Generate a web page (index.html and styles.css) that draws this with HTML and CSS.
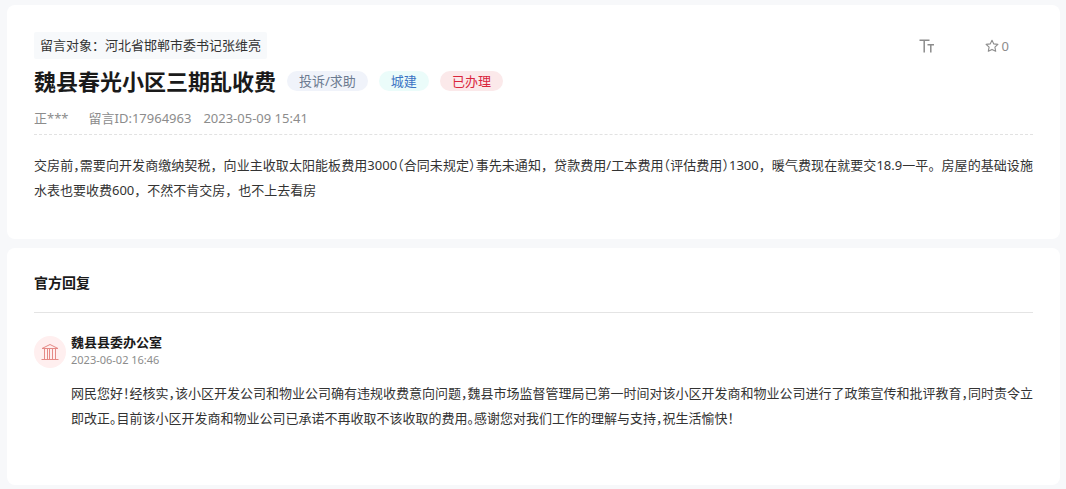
FILE: index.html
```html
<!DOCTYPE html>
<html lang="zh-CN">
<head>
<meta charset="utf-8">
<meta name="viewport" content="width=device-width, initial-scale=1">
<title>魏县春光小区三期乱收费</title>
<link rel="stylesheet" href="styles.css">
</head>
<body>
<main class="page">
  <article class="card message">
    <header class="message-head">
      <div class="top-row">
        <p class="target">留言对象：河北省邯郸市委书记张维亮</p>
        <div class="actions">
          <button class="action" type="button" aria-label="字号">
            <svg width="16" height="16" viewBox="0 0 16 16" fill="none" stroke="currentColor" stroke-width="1.5"><path d="M0.5 2.2H10.5M5.2 2.2V14.5M8.5 6.8H15M11.8 6.8V14.5"/></svg>
          </button>
          <button class="action" type="button" aria-label="收藏 0">
            <svg width="14" height="14" viewBox="0 0 14 14" fill="none" stroke="currentColor" stroke-width="1.1" stroke-linejoin="round"><path d="M7 1.2 8.8 4.9 12.9 5.4 9.9 8.2 10.7 12.3 7 10.4 3.3 12.3 4.1 8.2 1.1 5.4 5.2 4.9Z"/></svg>
            <span>0</span>
          </button>
        </div>
      </div>
      <div class="title-row">
        <h1 class="title">魏县春光小区三期乱收费</h1>
        <span class="tag tag-type">投诉/求助</span>
        <span class="tag tag-field">城建</span>
        <span class="tag tag-state">已办理</span>
      </div>
      <div class="meta">
        <span class="author">正***</span>
        <span>留言ID:17964963</span>
        <time>2023-05-09 15:41</time>
      </div>
    </header>
    <p class="text">交房前<span class="half">，</span>需要向开发商缴纳契税，向业主收取太阳能板费用3000<span class="half">（</span>合同未规定<span class="half">）</span>事先未通知，贷款费用/工本费用<span class="half">（</span>评估费用<span class="half">）</span>1300，暖气费现在就要交18.9一平。房屋的基础设施水表也要收费600，不然不肯交房，也不上去看房</p>
  </article>

  <section class="card replies">
    <h2 class="section-title">官方回复</h2>
    <article class="reply">
      <header class="reply-head">
        <span class="avatar">
          <svg width="18" height="18" viewBox="0 0 18 18" fill="none" stroke="currentColor"><path d="M1 5.5 9 1.5 17 5.5Z" stroke-linejoin="round"/><path d="M0.5 16.5H17.5M1.5 5.5H16.5M3.5 6V16M6.5 6V16M8.5 6V16M11.5 6V16M14.5 6V16"/></svg>
        </span>
        <div class="reply-by">
          <h3 class="reply-name">魏县县委办公室</h3>
          <time class="reply-time">2023-06-02 16:46</time>
        </div>
      </header>
      <p class="text reply-text half">网民您好！经核实，该小区开发公司和物业公司确有违规收费意向问题，魏县市场监督管理局已第一时间对该小区开发商和物业公司进行了政策宣传和批评教育，同时责令立即改正。目前该小区开发商和物业公司已承诺不再收取不该收取的费用。感谢您对我们工作的理解与支持，祝生活愉快！</p>
    </article>
  </section>
</main>
</body>
</html>
```
FILE: styles.css
```css
* {
  box-sizing: border-box;
  margin: 0;
  padding: 0;
}

body {
  background: #f7f8fa;
  color: #333;
  font-family: "Noto Sans", "Noto Sans CJK SC", sans-serif;
  font-size: 13px;
}

.page {
  display: flex;
  flex-direction: column;
  gap: 9px;
  padding: 5px 6px 4px 7px;
}

.card {
  background: #fff;
  border-radius: 8px;
  padding: 27px;
}

.message {
  padding-bottom: 36px;
}

.message-head {
  border-bottom: 1px dashed #e2e2e2;
  padding-bottom: 4px;
}

.top-row {
  display: flex;
  align-items: center;
  justify-content: space-between;
}

.target {
  background: #f7f9fb;
  border-radius: 2px;
  line-height: 27px;
  padding: 0 6px;
}

.actions {
  display: flex;
  gap: 50px;
  padding-right: 24px;
}

.action {
  display: flex;
  align-items: center;
  gap: 3px;
  border: 0;
  background: none;
  color: #8c8c8c;
  font: inherit;
  cursor: pointer;
}

.title-row {
  display: flex;
  flex-wrap: wrap;
  align-items: center;
  gap: 11px;
  margin-top: 4px;
}

.title {
  color: #1a1a1a;
  font-size: 22px;
  line-height: 36px;
}

.tag {
  border-radius: 10px;
  line-height: 20px;
  padding: 0 12px;
}

.tag-type {
  background: #f0f3fa;
  color: #6b7a90;
}

.tag-field {
  background: #ebfcfa;
  color: #3b75c4;
}

.tag-state {
  background: #fbe9ea;
  color: #d9263c;
}

.meta {
  display: flex;
  gap: 12px;
  color: #8c8c8c;
  line-height: 24px;
  margin-top: 7px;
}

.author {
  margin-right: 8px;
}

.text {
  line-height: 25px;
  text-align: justify;
}

.message .text {
  margin-top: 18px;
}

.half {
  font-feature-settings: "halt";
}

.replies {
  padding-bottom: 54px;
}

.section-title {
  border-bottom: 1px solid #e4e4e4;
  color: #1a1a1a;
  font-size: 14px;
  line-height: 16px;
  padding-bottom: 21px;
}

.reply {
  padding-top: 21px;
}

.reply-head {
  display: flex;
  align-items: center;
  gap: 5px;
}

.avatar {
  display: grid;
  place-items: center;
  width: 32px;
  height: 32px;
  border-radius: 50%;
  background: #ffefef;
  color: #e58a86;
}

.reply-name {
  color: #1a1a1a;
  font-size: 13px;
  line-height: 16px;
}

.reply-time {
  display: block;
  color: #8c8c8c;
  font-size: 11px;
  line-height: 20px;
}

.reply-text {
  margin-top: 11px;
  padding-left: 37px;
}
```
